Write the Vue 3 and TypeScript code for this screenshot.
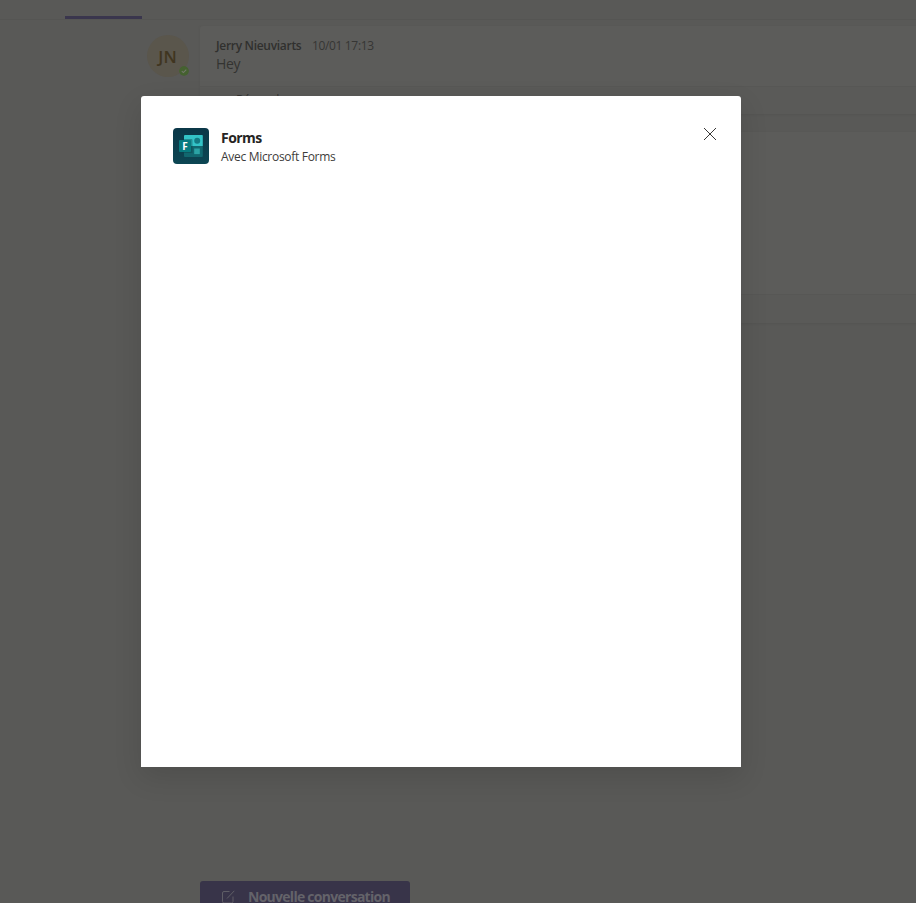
<script setup lang="ts">
interface Message {
  author: string
  initials: string
  date: string
  body: string
}

const message: Message = {
  author: 'Jerry Nieuviarts',
  initials: 'JN',
  date: '10/01 17:13',
  body: 'Hey',
}
</script>

<template>
  <div class="page">
    <header class="tabs"><span class="active-tab"></span></header>

    <main class="feed">
      <section class="thread">
        <div class="avatar">
          <span>{{ message.initials }}</span>
          <svg class="presence" viewBox="0 0 10 10">
            <circle cx="5" cy="5" r="5" />
            <path d="M2.8 5.1 4.4 6.6 7.3 3.7" />
          </svg>
        </div>
        <article class="card first">
          <div class="message">
            <div class="meta">
              <strong>{{ message.author }}</strong>
              <time>{{ message.date }}</time>
            </div>
            <p>{{ message.body }}</p>
          </div>
          <div class="reply">
            <svg viewBox="0 0 12 12"><path d="M5 1 1 5l4 4M1 5h6q4 0 4 5" /></svg>
            <span>Répondre</span>
          </div>
        </article>
      </section>
      <section class="thread">
        <article class="card second">
          <div class="message"></div>
          <div class="reply"></div>
        </article>
      </section>
    </main>

    <footer class="compose">
      <button class="new-conversation">
        <svg viewBox="0 0 14 14">
          <path d="M8.500 1.500H3Q1.500 1.500 1.500 3v8.500q0 1.500 1.500 1.500h7.500q1.500 0 1.500-1.500V6.500M6 8.500 13.300.8" />
        </svg>
        <span>Nouvelle conversation</span>
      </button>
    </footer>

    <div class="backdrop">
      <div class="dialog" role="dialog">
        <div class="dialog-header">
          <svg class="forms-logo" viewBox="0 0 36 36">
            <defs>
              <linearGradient id="tile" x1="0" y1="0" x2="0" y2="1">
                <stop offset="0" stop-color="#0b3748" />
                <stop offset="1" stop-color="#0c4653" />
              </linearGradient>
            </defs>
            <rect width="36" height="36" rx="4" fill="url(#tile)" />
            <path d="M12 7h17q.8 0 .8.8V18H11V8q0-1 1-1z" fill="#33c3c7" />
            <path d="M11 18h18.800v10q0 1-1 1H12q-1 0-1-1z" fill="#11676f" />
            <circle cx="24.200" cy="12.700" r="3" fill="#147b84" />
            <rect x="21.200" y="20.500" width="5.600" height="5.600" fill="#2ba3a5" />
            <path d="M11 11h7.500q1 0 1 1v13H11z" fill="#0b3f49" opacity=".4" />
            <rect x="6" y="12" width="12" height="12" rx="1" fill="#087b80" />
            <text x="9.300" y="21.600">F</text>
          </svg>
          <div class="titles">
            <h1>Forms</h1>
            <p>Avec Microsoft Forms</p>
          </div>
          <button class="close" aria-label="Fermer">
            <svg viewBox="0 0 12 12"><path d="m0 0 12 12M12 0 0 12" /></svg>
          </button>
        </div>
      </div>
    </div>
  </div>
</template>

<style>
body {
  overflow: hidden;
}
</style>

<style scoped>
.page {
  position: relative;
  display: flex;
  flex-direction: column;
  width: 916px;
  height: 903px;
  overflow: hidden;
  background: #595957;
  color: #333331;
  font-family: 'Open Sans', 'Noto Sans', sans-serif;
}
p,
h1 {
  margin: 0;
}
button {
  border: 0;
  padding: 0;
  font: inherit;
}
svg {
  display: block;
  flex: none;
  fill: none;
  stroke: currentColor;
}
.tabs {
  display: flex;
  align-items: flex-end;
  box-sizing: border-box;
  height: 20px;
  padding-left: 65px;
  border-bottom: 1px solid #555553;
  flex: none;
}
.active-tab {
  width: 77px;
  height: 3px;
  background: #3a364d;
}
.feed {
  display: flex;
  flex: 1;
  flex-direction: column;
  gap: 18px;
  padding-top: 6px;
}
.thread {
  display: flex;
  justify-content: flex-end;
}
.avatar {
  position: relative;
  display: flex;
  align-items: center;
  justify-content: center;
  box-sizing: border-box;
  width: 42px;
  height: 42px;
  margin: 9px 11px 0 0;
  padding-right: 1px;
  border-radius: 50%;
  background: #5a564c;
  color: #403520;
  font-size: 17px;
  font-weight: 600;
}
.presence {
  position: absolute;
  right: 0;
  bottom: 1px;
  width: 10px;
  height: 10px;
  border-radius: 50%;
}
.presence circle {
  fill: #456130;
  stroke: none;
}
.presence path {
  stroke: #73776b;
  stroke-width: 1.1;
}
.card {
  display: flex;
  flex-direction: column;
  box-sizing: border-box;
  width: 716px;
  border-radius: 3px 0 0 3px;
  background: #5c5c5a;
  box-shadow: 0 1px 2px #545452;
}
.card .message {
  flex: 1;
}
.first {
  height: 88px;
}
.second {
  height: 191px;
}
.first .message {
  padding: 11px 16px 0;
}
.meta {
  display: flex;
  gap: 10px;
  font-size: 12px;
  line-height: 17px;
}
.meta strong {
  width: 86px;
  color: #30302e;
  font-weight: 600;
  letter-spacing: -0.3px;
  white-space: nowrap;
}
.meta time {
  color: #363634;
  letter-spacing: -0.35px;
}
.message p {
  font-size: 14px;
  line-height: 20px;
  letter-spacing: -0.3px;
}
.reply {
  display: flex;
  align-items: flex-start;
  gap: 6px;
  box-sizing: border-box;
  height: 28px;
  padding: 5px 18px 0;
  border-top: 1px solid #575755;
  background: #5a5a58;
  font-size: 12px;
  line-height: 16px;
}
.second .reply {
  height: 29px;
}
.reply svg {
  width: 12px;
  height: 12px;
  margin-top: 3px;
}
.compose {
  flex: none;
  height: 22px;
  padding-left: 200px;
}
.new-conversation {
  display: flex;
  align-items: center;
  gap: 13px;
  width: 210px;
  height: 32px;
  padding-left: 21px;
  border-radius: 3px;
  background: #383449;
  color: #64636a;
  font-size: 14px;
  font-weight: 700;
  letter-spacing: -0.73px;
  white-space: nowrap;
}
.new-conversation svg {
  width: 14px;
  height: 14px;
  stroke-width: 0.9;
}
.new-conversation span {
  line-height: 18px;
}
.backdrop {
  position: absolute;
  inset: 0;
  display: flex;
  align-items: flex-start;
  padding: 96px 0 0 141px;
}
.dialog {
  width: 600px;
  height: 671px;
  border-radius: 3px 3px 0 0;
  background: #fff;
  box-shadow: 0 10px 28px rgba(0, 0, 0, 0.12);
}
.dialog-header {
  display: flex;
  gap: 12px;
  padding: 32px 25px 0 32px;
}
.forms-logo {
  width: 36px;
  height: 36px;
  stroke: none;
}
.forms-logo text {
  fill: #fff;
  font-size: 10px;
  font-weight: 700;
}
.titles {
  flex: 1;
}
h1 {
  color: #252423;
  font-size: 14px;
  font-weight: 700;
  line-height: 20px;
  letter-spacing: -0.55px;
}
.titles p {
  color: #3d3c3b;
  font-size: 12px;
  line-height: 18px;
  letter-spacing: -0.3px;
}
.close {
  align-self: flex-start;
  width: 12px;
  height: 12px;
  background: none;
  color: #383736;
}
.close svg {
  width: 12px;
  height: 12px;
  stroke-width: 1;
}
</style>
